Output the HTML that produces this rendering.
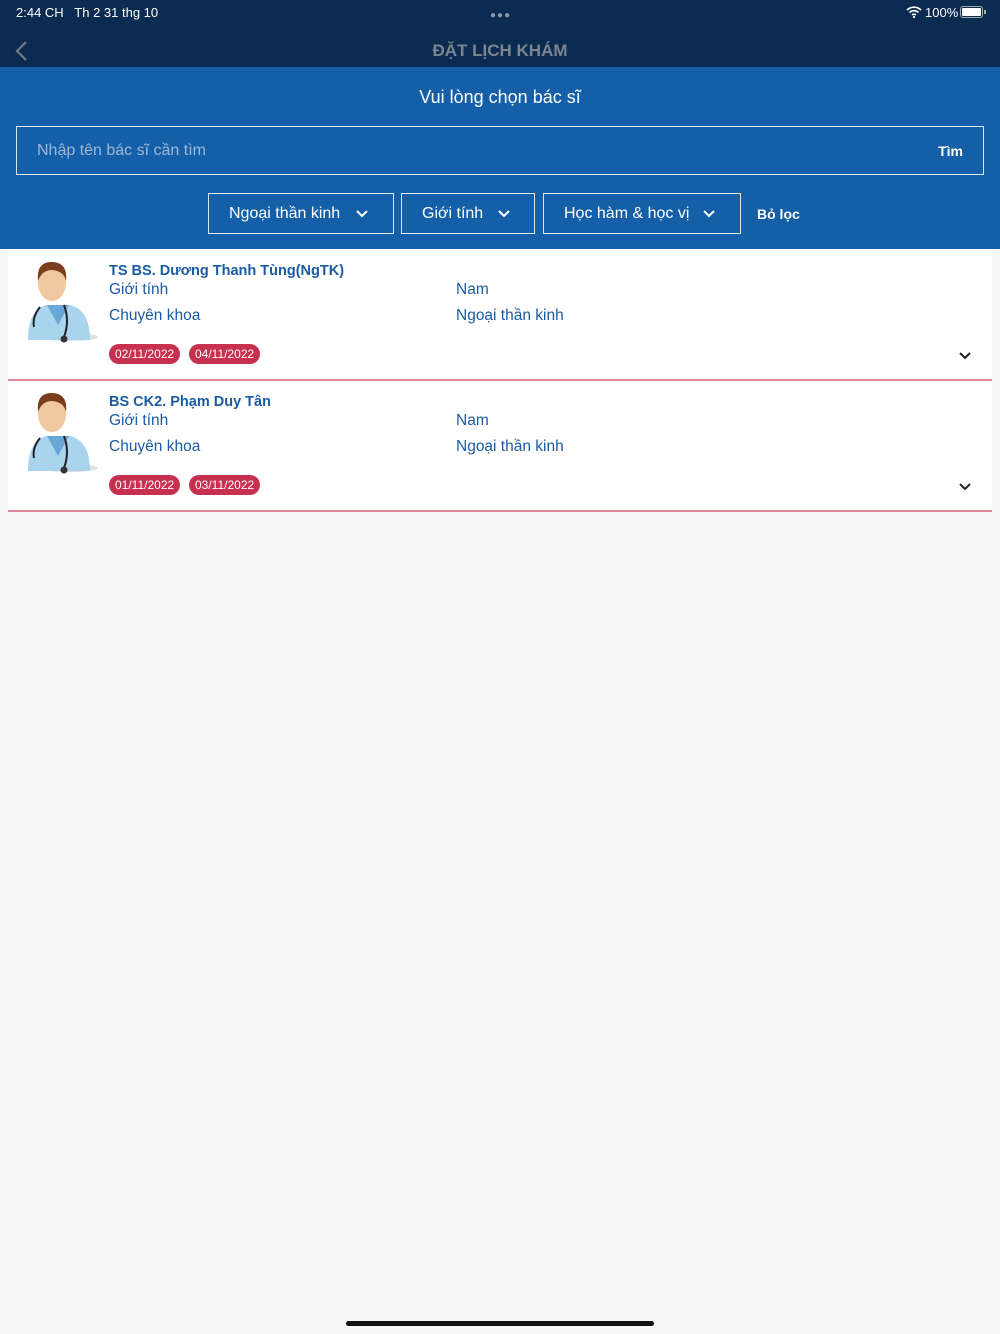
<!DOCTYPE html>
<html><head><meta charset="utf-8"><style>
*{margin:0;padding:0;box-sizing:border-box}
body{width:1000px;height:1334px;background:#f8f8f8;font-family:"Liberation Sans",sans-serif;position:relative;overflow:hidden}
.top{position:absolute;left:0;top:0;width:1000px;height:67px;background:#0b2b50}
.blue{position:absolute;left:0;top:67px;width:1000px;height:182px;background:#155fa8}
.abs{position:absolute}
.sb{color:#fff;font-size:13px}
.title{left:0;width:1000px;text-align:center;top:41px;color:#7d8590;font-size:17px;font-weight:bold}
.sub{left:0;width:1000px;text-align:center;top:87px;color:#fff;font-size:18px}
.search{left:16px;top:126px;width:968px;height:49px;border:1.5px solid #dfe8f2}
.search .ph{position:absolute;left:20px;top:15px;color:#9fb8d6;font-size:16px}
.search .t{position:absolute;right:20px;top:16px;color:#fff;font-size:14px;font-weight:bold}
.dd{top:193px;height:41px;border:1.5px solid #dfe8f2;color:#fff;font-size:16px;padding:11px 0 0 20px}
.dd svg{position:absolute;top:15px}
.card{position:absolute;left:8px;width:984px;height:131px;background:#fff;border-bottom:2px solid #e08a9e}
.name{position:absolute;left:101px;top:13px;color:#1a5ba3;font-size:14.5px;font-weight:bold}
.lab{position:absolute;color:#1a5ba3;font-size:15.5px}
.tag{position:absolute;top:94px;height:20px;border-radius:10px;background:#c8304f;color:#fff;font-size:12px;padding:3px 6px 0}
.chev{position:absolute;left:950px;top:101px}
</style></head><body>
<div class="top"></div><div class="blue"></div>
<div class="abs sb" style="left:16px;top:5px">2:44 CH &nbsp; Th 2 31 thg 10</div>
<div class="abs" style="left:490px;top:10px;color:#8a97a8;font-size:10px;letter-spacing:1px">●●●</div>
<div class="abs sb" style="left:925px;top:5px">100%</div>
<svg class="abs" style="left:906px;top:6px" width="16" height="12" viewBox="0 0 16 12"><path d="M1 4a10 10 0 0 1 14 0M3.5 6.5a6.5 6.5 0 0 1 9 0M6 9a3 3 0 0 1 4 0" stroke="#fff" stroke-width="1.6" fill="none"/><circle cx="8" cy="11" r="1.1" fill="#fff"/></svg>
<div class="abs" style="left:960px;top:6px;width:23px;height:12px;border:1px solid #aaa;border-radius:3px;padding:1px"><div style="width:100%;height:100%;background:#fff;border-radius:1px"></div></div>
<div class="abs" style="left:984px;top:10px;width:2px;height:4px;background:#aaa"></div>
<svg class="abs" style="left:14px;top:40px" width="14" height="22" viewBox="0 0 14 22"><path d="M12 2L3 11l9 9" stroke="#6f7a86" stroke-width="2.2" fill="none"/></svg>
<div class="abs title">ĐẶT LỊCH KHÁM</div>
<div class="abs sub">Vui lòng chọn bác sĩ</div>
<div class="abs search"><span class="ph">Nhập tên bác sĩ cần tìm</span><span class="t">Tìm</span></div>
<div class="abs dd" style="left:208px;width:186px">Ngoại thần kinh<svg style="left:146px" width="14" height="10" viewBox="0 0 14 10"><path d="M2 2l5 5 5-5" stroke="#fff" stroke-width="2" fill="none"/></svg></div>
<div class="abs dd" style="left:401px;width:134px">Giới tính<svg style="left:95px" width="14" height="10" viewBox="0 0 14 10"><path d="M2 2l5 5 5-5" stroke="#fff" stroke-width="2" fill="none"/></svg></div>
<div class="abs dd" style="left:543px;width:198px">Học hàm &amp; học vị<svg style="left:158px" width="14" height="10" viewBox="0 0 14 10"><path d="M2 2l5 5 5-5" stroke="#fff" stroke-width="2" fill="none"/></svg></div>
<div class="abs" style="left:757px;top:206px;color:#fff;font-size:14px;font-weight:bold">Bỏ lọc</div>

<div class="card" style="top:250px">
<svg class="abs" style="left:12px;top:5px" width="80" height="90" viewBox="0 0 80 90">
<ellipse cx="50" cy="82" rx="28" ry="4" fill="#ccc" opacity=".6"/>
<path d="M8 85 Q8 55 26 50 L50 50 Q70 55 70 85Z" fill="#a9d4ee"/>
<path d="M27 50 L38 70 L49 50Z" fill="#6aa6d6"/>
<ellipse cx="32" cy="28" rx="14" ry="18" fill="#f0c8a0"/>
<path d="M18 26 Q16 6 33 7 Q48 8 46 26 Q44 16 32 15 Q22 15 18 26Z" fill="#7a3e1e"/>
<path d="M20 52 Q12 62 14 72 M44 50 Q50 66 44 82" stroke="#222" stroke-width="2" fill="none"/>
<circle cx="44" cy="84" r="3.5" fill="#333"/>
</svg>
<div class="name">TS BS. Dương Thanh Tùng(NgTK)</div>
<div class="lab" style="left:101px;top:31px">Giới tính</div>
<div class="lab" style="left:448px;top:31px">Nam</div>
<div class="lab" style="left:101px;top:57px">Chuyên khoa</div>
<div class="lab" style="left:448px;top:57px">Ngoại thần kinh</div>
<div class="tag" style="left:101px">02/11/2022</div>
<div class="tag" style="left:181px">04/11/2022</div>
<svg class="chev" width="14" height="10" viewBox="0 0 14 10"><path d="M2 2l5 5 5-5" stroke="#222" stroke-width="2" fill="none"/></svg>
</div>

<div class="card" style="top:381px">
<svg class="abs" style="left:12px;top:5px" width="80" height="90" viewBox="0 0 80 90">
<ellipse cx="50" cy="82" rx="28" ry="4" fill="#ccc" opacity=".6"/>
<path d="M8 85 Q8 55 26 50 L50 50 Q70 55 70 85Z" fill="#a9d4ee"/>
<path d="M27 50 L38 70 L49 50Z" fill="#6aa6d6"/>
<ellipse cx="32" cy="28" rx="14" ry="18" fill="#f0c8a0"/>
<path d="M18 26 Q16 6 33 7 Q48 8 46 26 Q44 16 32 15 Q22 15 18 26Z" fill="#7a3e1e"/>
<path d="M20 52 Q12 62 14 72 M44 50 Q50 66 44 82" stroke="#222" stroke-width="2" fill="none"/>
<circle cx="44" cy="84" r="3.5" fill="#333"/>
</svg>
<div class="name">BS CK2. Phạm Duy Tân</div>
<div class="lab" style="left:101px;top:31px">Giới tính</div>
<div class="lab" style="left:448px;top:31px">Nam</div>
<div class="lab" style="left:101px;top:57px">Chuyên khoa</div>
<div class="lab" style="left:448px;top:57px">Ngoại thần kinh</div>
<div class="tag" style="left:101px">01/11/2022</div>
<div class="tag" style="left:181px">03/11/2022</div>
<svg class="chev" width="14" height="10" viewBox="0 0 14 10"><path d="M2 2l5 5 5-5" stroke="#222" stroke-width="2" fill="none"/></svg>
</div>

<div class="abs" style="left:346px;top:1321px;width:308px;height:5px;border-radius:3px;background:#111"></div>
</body></html>
